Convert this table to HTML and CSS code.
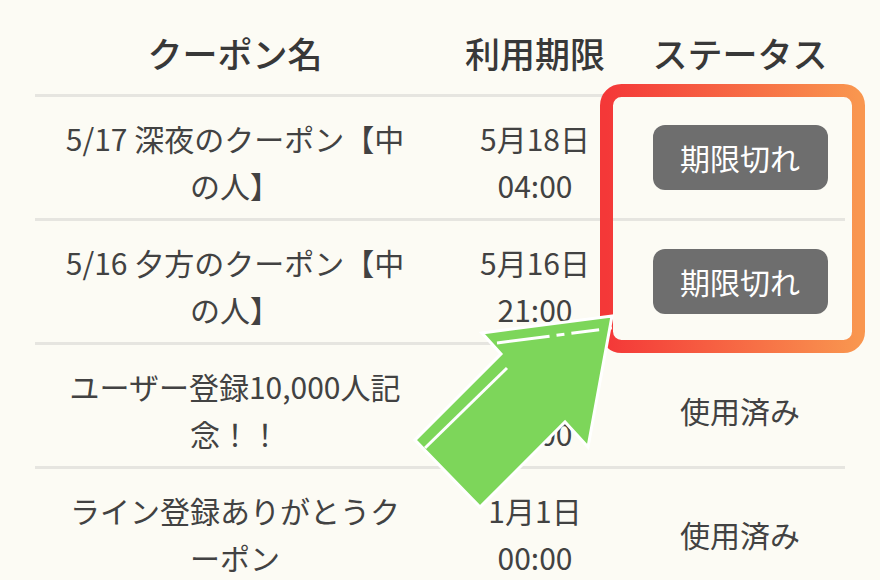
FILE: index.html
```html
<!DOCTYPE html>
<html lang="ja">
<head>
<meta charset="utf-8">
<title>クーポン</title>
<link rel="stylesheet" href="styles.css">
</head>
<body>
<div class="table">
  <div class="row head">
    <div class="cell c1">クーポン名</div>
    <div class="cell c2">利用期限</div>
    <div class="cell c3">ステータス</div>
  </div>
  <div class="row">
    <div class="cell c1">5/17 深夜のクーポン【中の人】</div>
    <div class="cell c2">5月18日 04:00</div>
    <div class="cell c3 bc"><span class="badge">期限切れ</span></div>
  </div>
  <div class="row">
    <div class="cell c1">5/16 夕方のクーポン【中の人】</div>
    <div class="cell c2">5月16日 21:00</div>
    <div class="cell c3 bc"><span class="badge">期限切れ</span></div>
  </div>
  <div class="row">
    <div class="cell c1">ユーザー登録10,000人記念！！</div>
    <div class="cell c2">5月1日 00:00</div>
    <div class="cell c3">使用済み</div>
  </div>
  <div class="row">
    <div class="cell c1">ライン登録ありがとうクーポン</div>
    <div class="cell c2">1月1日 00:00</div>
    <div class="cell c3">使用済み</div>
  </div>
</div>
<svg class="overlay" width="880" height="580" viewBox="0 0 880 580">
  <defs>
    <linearGradient id="g" x1="0" x2="1" y1="0" y2="0">
      <stop offset="0" stop-color="#f43838"/>
      <stop offset="1" stop-color="#f9964f"/>
    </linearGradient>
  </defs>
  <rect x="606.5" y="90.5" width="252" height="256" rx="15" fill="none" stroke="url(#g)" stroke-width="13"/>
  <polygon points="482,333 612,316 588,447 565,422 480,507 415,440 501,354" fill="#7dd65a" stroke="#fff" stroke-width="3" stroke-linejoin="miter"/>
  <line x1="425" y1="448" x2="507" y2="368" stroke="#fff" stroke-width="3"/>
  <line x1="497" y1="343" x2="612" y2="328" stroke="#fff" stroke-width="3" stroke-dasharray="53 7 8 7 28 12"/>
</svg>
</body>
</html>
```

FILE: styles.css
```css
html, body {
  margin: 0;
  padding: 0;
}
body {
  background: #fcfbf4;
  width: 880px;
  height: 580px;
  overflow: hidden;
  position: relative;
  font-family: "Noto Sans CJK JP", "Noto Sans", sans-serif;
  color: #424242;
}
.table {
  margin-left: 35px;
  width: 810px;
}
.row {
  display: grid;
  grid-template-columns: 400px 200px 210px;
  height: 121px;
  border-bottom: 3px solid #e6e5e0;
}
.row.head {
  height: 94px;
}
.cell {
  display: flex;
  align-items: center;
  justify-content: center;
  text-align: center;
  font-size: 30px;
  line-height: 47px;
  padding-top: 9px;
  box-sizing: border-box;
}
.c1 {
  padding-left: 22px;
  padding-right: 22px;
}
.c2 {
  padding-left: 16px;
  padding-right: 16px;
}
.head .cell {
  font-weight: 500;
  font-size: 35px;
  color: #383838;
  padding-top: 10px;
}
.cell.bc {
  padding-top: 0;
}
.badge {
  display: inline-flex;
  align-items: center;
  justify-content: center;
  width: 175px;
  height: 65px;
  border-radius: 12px;
  background: #6e6e6e;
  color: #fff;
}
.overlay {
  position: absolute;
  left: 0;
  top: 0;
  pointer-events: none;
}
```
